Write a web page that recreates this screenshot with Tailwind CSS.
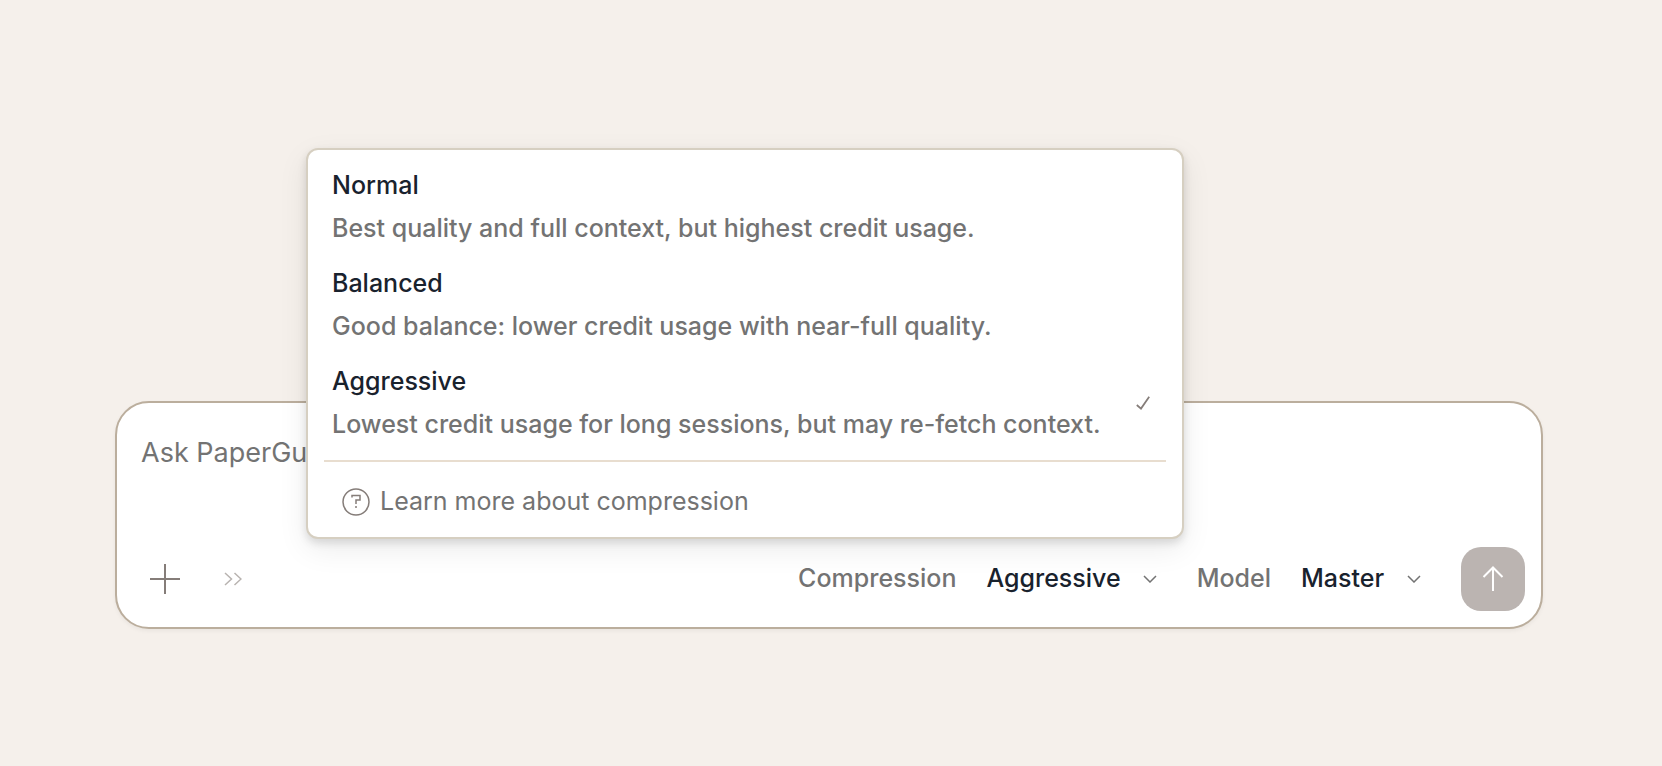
<!DOCTYPE html>
<html lang="en">
<head>
<meta charset="utf-8">
<meta name="viewport" content="width=device-width, initial-scale=1">
<title>PaperGuide</title>
<script src="https://cdn.jsdelivr.net/npm/@tailwindcss/browser@4"></script>
</head>
<body class="min-h-screen bg-[#f5f0eb] font-['Inter','Liberation_Sans',sans-serif] text-[25px] text-[#737373]">
<main class="pt-[401px] pr-[119px] pb-32 pl-[115px]">
  <form class="relative flex flex-col rounded-[34px] border-2 border-[#bbae9d] bg-white pt-6 pr-4 pb-4 pl-6 shadow-[0_2px_4px_rgba(0,0,0,0.05)]">
    <textarea aria-label="Message" placeholder="Ask PaperGu" rows="1" class="block h-[120px] w-full resize-none bg-transparent text-[27px] leading-[52px] outline-none placeholder:text-[#737373]"></textarea>

    <div class="flex h-16 items-center">
      <button type="button" aria-label="Add" class="flex size-12 items-center justify-center text-[#857d79]">
        <svg class="size-[30px]" viewBox="0 0 30 30" fill="none" stroke="currentColor" stroke-width="2"><path d="M15 0v30M0 15h30"/></svg>
      </button>
      <button type="button" aria-label="Expand tools" class="ml-5 flex size-12 items-center justify-center text-[#b8b3b0]">
        <svg class="h-[14px] w-[18px]" viewBox="0 0 18 14" fill="none" stroke="currentColor" stroke-width="1.5"><path d="M1 1l6.500 6L1 13M10.500 1l6.500 6-6.500 6"/></svg>
      </button>

      <div class="ml-auto flex items-center gap-10">
        <div class="flex items-center gap-[30px]">
          <span id="compression-label" class="font-medium">Compression</span>
          <button type="button" aria-haspopup="listbox" aria-expanded="true" aria-labelledby="compression-label compression-value" class="flex items-center gap-[22px] font-medium text-[#19222d]">
            <span id="compression-value">Aggressive</span>
            <svg class="h-2 w-[14px] text-[#737373]" viewBox="0 0 14 8" fill="none" stroke="currentColor" stroke-width="1.5"><path d="M1 1l6 6 6-6"/></svg>
          </button>
        </div>
        <div class="flex items-center gap-[30px]">
          <label for="model" class="font-medium">Model</label>
          <div class="flex items-center gap-[22px]">
            <select id="model" class="appearance-none bg-transparent font-medium text-[#19222d] outline-none"><option>Master</option></select>
            <svg class="h-2 w-[14px]" viewBox="0 0 14 8" fill="none" stroke="currentColor" stroke-width="1.5"><path d="M1 1l6 6 6-6"/></svg>
          </div>
        </div>
        <button type="submit" aria-label="Send" class="flex size-16 items-center justify-center rounded-[20px] bg-[#bbb4b1] text-white">
          <svg class="h-[26px] w-[22px]" viewBox="0 0 22 26" fill="none" stroke="currentColor" stroke-width="2"><path d="M11 25V2M1.500 11L11 1.500 20.500 11"/></svg>
        </button>
      </div>
    </div>

    <!-- Compression menu -->
    <div class="absolute bottom-[88px] left-[189px] flex w-[878px] flex-col rounded-xl border-2 border-[#d6cfc1] bg-white px-4 pt-4 pb-3 shadow-[0_10px_30px_rgba(0,0,0,0.08),0_4px_8px_rgba(0,0,0,0.12)]">
      <div role="listbox" aria-labelledby="compression-label" class="flex flex-col font-medium leading-[38px]">
        <button type="button" role="option" aria-selected="false" class="flex flex-col gap-[5px] px-2 pb-[17px] text-left">
          <span class="text-[#19222d]">Normal</span>
          <span>Best quality and full context, but highest credit usage.</span>
        </button>
        <button type="button" role="option" aria-selected="false" class="flex flex-col gap-[5px] px-2 pb-[17px] text-left">
          <span class="text-[#19222d]">Balanced</span>
          <span>Good balance: lower credit usage with near-full quality.</span>
        </button>
        <button type="button" role="option" aria-selected="true" class="flex items-center justify-between px-2 pb-[17px] text-left">
          <span class="flex flex-col gap-[5px] whitespace-nowrap">
            <span class="text-[#19222d]">Aggressive</span>
            <span>Lowest credit usage for long sessions, but may re-fetch context.</span>
          </span>
          <svg class="mr-2 h-[14px] w-[14px] shrink-0 text-[#857d79]" viewBox="0 0 14 14" fill="none" stroke="currentColor" stroke-width="1.750"><path d="M.8 9l4.200 3.600L13.200.8"/></svg>
        </button>
      </div>
      <div class="border-t-2 border-[#e8ddcf] pt-4">
        <a href="#" class="flex h-[47px] items-center gap-[10px] px-[18px]">
          <svg class="size-7 shrink-0 text-[#857d79]" viewBox="0 0 28 28" fill="none" stroke="currentColor" stroke-width="1.500"><circle cx="14" cy="14" r="13"/><path d="M10 9.500V7.500h8v4.500h-4v4M14 18v2"/></svg>
          Learn more about compression
        </a>
      </div>
    </div>
  </form>
</main>
</body>
</html>
